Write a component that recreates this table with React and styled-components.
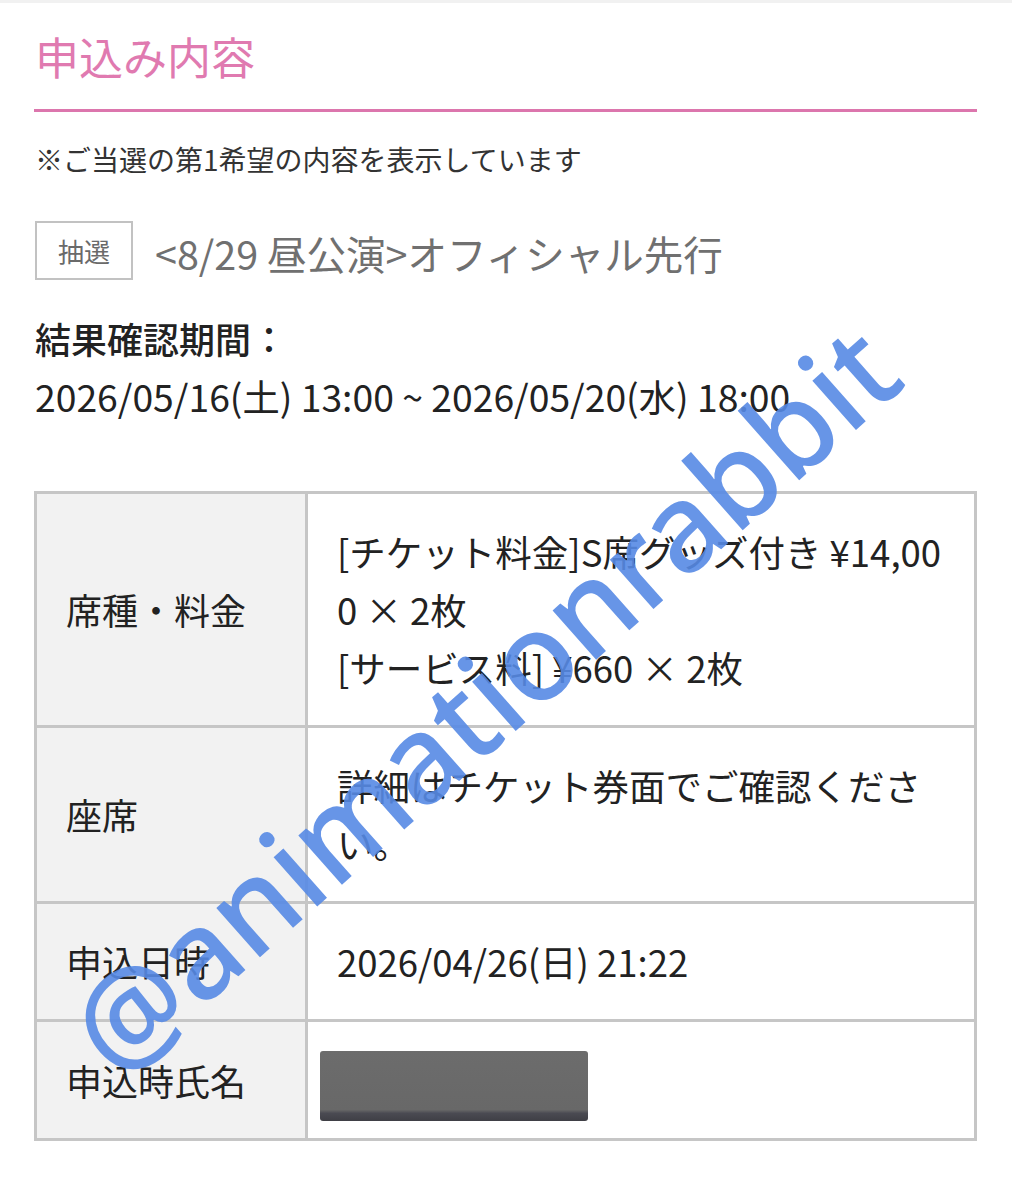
import React from 'react';
import styled, { createGlobalStyle } from 'styled-components';

const GlobalStyle = createGlobalStyle`
    html, body {
        margin: 0;
        padding: 0;
        background: #fff;
    }
    body {
        font-family: "Noto Sans CJK JP", "Noto Sans", sans-serif;
        color: #222;
    }
`;

const Page = styled.div`
    position: relative;
    overflow: hidden;
    min-height: 1200px;
    border-top: 3px solid #f1f1f1;
    padding: 0 35px 0 34px;
    box-sizing: border-box;
`;

const Heading = styled.h1`
    margin: 0;
    padding: 23px 0 21px 1px;
    font-size: 44px;
    line-height: 1.4;
    font-weight: 400;
    color: #e07ab0;
    border-bottom: 3px solid #dc76ad;
`;

const Note = styled.p`
    margin: 27px 0 0 1px;
    font-size: 28px;
    line-height: 40px;
    color: #333;
`;

const EventRow = styled.div`
    display: flex;
    align-items: center;
    gap: 22px;
    margin-top: 42px;
    padding-left: 1px;
`;

const Badge = styled.span`
    display: inline-block;
    border: 2px solid #c2c2c2;
    padding: 8px 21px;
    font-size: 26px;
    line-height: 1.5;
    color: #6a6a6a;
`;

const EventTitle = styled.span`
    font-size: 39.5px;
    line-height: 1.4;
    color: #707070;
    padding-top: 4px;
`;

const Period = styled.div`
    margin-top: 29px;
    padding-left: 1px;
    font-size: 37.3px;
    line-height: 58px;
    color: #222;
`;

const PeriodLabel = styled.div`
    font-weight: 500;
    font-size: 36px;
`;

const InfoTable = styled.div`
    display: grid;
    grid-template-columns: 268px 1fr;
    gap: 3px;
    margin-top: 66px;
    padding: 3px;
    background: #c6c6c6;
`;

const LabelCell = styled.div`
    display: flex;
    align-items: center;
    padding: 0 29px;
    background: #f2f2f2;
    font-size: 36px;
    line-height: 58px;
    color: #222;
`;

const ValueCell = styled.div`
    display: flex;
    flex-direction: column;
    justify-content: ${(p) => (p.$blank ? 'flex-start' : 'center')};
    min-height: ${(p) => (p.$blank ? 116 : 0)}px;
    padding: ${(p) => (p.$blank ? '29px 29px 0' : '29px 29px 28px')};
    background: #fff;
    font-size: 36.5px;
    line-height: 58px;
    color: #222;
    box-sizing: border-box;
`;

const Line = styled.span`
    display: block;
    white-space: nowrap;
`;

const Redacted = styled.div`
    width: 268px;
    height: 70px;
    margin-left: -17px;
    border-radius: 3px;
    background: linear-gradient(to bottom, #6c6c6c 0%, #686868 84%, #4a4a52 89%, #3f3f45 100%);
`;

const Watermark = styled.span`
    position: absolute;
    left: 482px;
    top: 695px;
    transform: translate(-50%, -50%) rotate(-41.5deg);
    font-family: "Noto Sans", "Open Sans", sans-serif;
    font-size: 122px;
    font-weight: 500;
    line-height: 1;
    color: rgba(86, 138, 228, 0.9);
    white-space: nowrap;
    pointer-events: none;
`;

const rows = [
    {
        label: '席種・料金',
        lines: ['[チケット料金]S席グッズ付き ¥14,00', '0 × 2枚', '[サービス料] ¥660 × 2枚'],
    },
    {
        label: '座席',
        lines: ['詳細はチケット券面でご確認くださ', 'い。'],
    },
    {
        label: '申込日時',
        lines: ['2026/04/26(日) 21:22'],
    },
];

const App = () => {
    return (
        <>
            <GlobalStyle />
            <Page>
                <Heading>申込み内容</Heading>
                <Note>※ご当選の第1希望の内容を表示しています</Note>
                <EventRow>
                    <Badge>抽選</Badge>
                    <EventTitle>&lt;8/29 昼公演&gt;オフィシャル先行</EventTitle>
                </EventRow>
                <Period>
                    <PeriodLabel>結果確認期間：</PeriodLabel>
                    <div>2026/05/16(土) 13:00 ~ 2026/05/20(水) 18:00</div>
                </Period>
                <InfoTable>
                    {rows.map((row) => (
                        <React.Fragment key={row.label}>
                            <LabelCell>{row.label}</LabelCell>
                            <ValueCell>
                                {row.lines.map((line) => (
                                    <Line key={line}>{line}</Line>
                                ))}
                            </ValueCell>
                        </React.Fragment>
                    ))}
                    <LabelCell>申込時氏名</LabelCell>
                    <ValueCell $blank>
                        <Redacted />
                    </ValueCell>
                </InfoTable>
                <Watermark>@animationrabbit</Watermark>
            </Page>
        </>
    );
};

export default App;
